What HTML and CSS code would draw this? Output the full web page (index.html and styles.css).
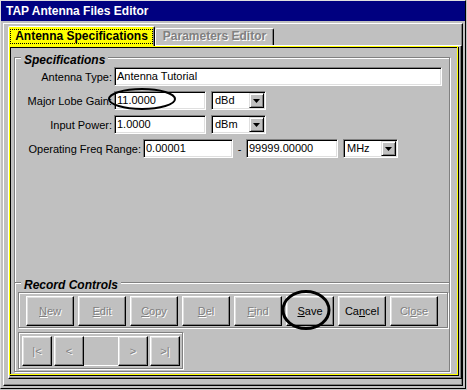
FILE: index.html
```html
<!DOCTYPE html>
<html>
<head lang="en">
    <meta charset="UTF-8">
    <title>TAP Antenna Files Editor</title>
    <link rel="stylesheet" href="styles.css">
</head>
<body>
<div class="window">
    <div class="titlebar">TAP Antenna Files Editor</div>
    <div class="client">
        <!-- tabs -->
        <div class="tabs">
            <div class="tab tab-active"><span class="tab-focus">Antenna Specifications</span></div>
            <div class="tab tab-off">Parameters Editor</div>
        </div>
        <div class="page">
            <div class="page-focus">
                <div class="page-body">
                    <div class="group group-spec">
                        <div class="group-title">Specifications</div>
                        <div class="row">
                            <label class="lbl">Antenna Type:</label>
                            <div class="field w-type">Antenna Tutorial</div>
                        </div>
                        <div class="row">
                            <label class="lbl">Major Lobe Gain:</label>
                            <div class="field w-num">11.0000</div>
                            <div class="combo"><span class="combo-text">dBd</span><span class="combo-btn"><svg width="7" height="4"><path d="M0 0h7L3.5 4z"/></svg></span></div>
                        </div>
                        <div class="row">
                            <label class="lbl">Input Power:</label>
                            <div class="field w-num">1.0000</div>
                            <div class="combo"><span class="combo-text">dBm</span><span class="combo-btn"><svg width="7" height="4"><path d="M0 0h7L3.5 4z"/></svg></span></div>
                        </div>
                        <div class="row">
                            <label class="lbl lbl-wide">Operating Freq Range:</label>
                            <div class="field w-freq">0.00001</div>
                            <span class="dash">-</span>
                            <div class="field w-num">99999.00000</div>
                            <div class="combo"><span class="combo-text">MHz</span><span class="combo-btn"><svg width="7" height="4"><path d="M0 0h7L3.5 4z"/></svg></span></div>
                        </div>
                        <div class="spacer"></div>

                        <!-- record controls -->
                        <div class="group group-record">
                            <div class="group-title">Record Controls</div>
                            <div class="btn-panel">
                                <div class="btn off"><u>N</u>ew</div>
                                <div class="btn off"><u>E</u>dit</div>
                                <div class="btn off"><u>C</u>opy</div>
                                <div class="btn off"><u>D</u>el</div>
                                <div class="btn off"><u>F</u>ind</div>
                                <div class="btn"><u>S</u>ave</div>
                                <div class="btn">Ca<u>n</u>cel</div>
                                <div class="btn off">Cl<u>o</u>se</div>
                            </div>
                            <div class="nav-panel">
                                <div class="btn nav off gap">|&lt;</div>
                                <div class="btn nav off">&lt;</div>
                                <div class="nav-field"></div>
                                <div class="btn nav off gap">&gt;</div>
                                <div class="btn nav off">&gt;|</div>
                            </div>
                        </div>
                    </div>
                </div>
            </div>
        </div>
    </div>
    <!-- hand drawn marks -->
    <svg class="marks" width="467" height="390">
        <ellipse cx="142" cy="99" rx="33" ry="10" fill="none" stroke="#000" stroke-width="2"/>
        <ellipse cx="306" cy="310" rx="23" ry="18.5" fill="none" stroke="#000" stroke-width="3"/>
    </svg>
</div>
</body>
</html>
```

FILE: styles.css
```css
* {
    box-sizing: border-box;
}
body {
    margin: 0;
    background: #c0c0c0;
    font-family: "Liberation Sans", Arial, sans-serif;
    font-size: 11px;
    color: #000;
}
.window {
    position: relative;
    width: 466px;
    height: 389px;
    display: flex;
    flex-direction: column;
    border: 1px solid;
    border-color: #dfdfdf #000 #000 #dfdfdf;
    background: #c0c0c0;
}
.titlebar {
    height: 20px;
    padding: 1px 0 0 5px;
    line-height: 19px;
    background: #000080;
    color: #fff;
    font-size: 12px;
    font-weight: bold;
}
.client {
    flex: 1;
    margin: 2px 2px 2px 2px;
    padding: 2px 0 6px 4px;
    border: 1px solid;
    border-color: #fff #000 #000 #fff;
    box-shadow: inset -1px -1px 0 #808080;
    display: flex;
    flex-direction: column;
}

/* tabs */
.tabs {
    height: 19px;
    display: flex;
    align-items: flex-end;
}
.tab {
    font-size: 12px;
    font-weight: bold;
    border-top: 1px solid #fff;
    border-left: 1px solid #fff;
    border-right: 1px solid #000;
    box-shadow: inset -1px 0 0 #808080;
    border-radius: 2px 2px 0 0;
}
.tab-active {
    position: relative;
    z-index: 1;
    width: 147px;
    height: 20px;
    margin-bottom: -1px;
    padding: 2px 0 0 1px;
    background: #ffff00;
}
.tab-focus {
    display: block;
    width: 143px;
    height: 15px;
    line-height: 13px;
    border: 1px dotted #000;
    text-align: center;
}
.tab-off {
    width: 119px;
    height: 17px;
    line-height: 15px;
    text-align: center;
    color: #808080;
    text-shadow: 1px 1px 0 #fff;
}

/* tab page */
.page {
    flex: 1;
    display: flex;
    padding: 0 3px 3px 0;
    border: 1px solid;
    border-color: #fff #000 #000 #fff;
    box-shadow: inset -1px -1px 0 #808080;
}
.page-focus {
    flex: 1;
    display: flex;
    border: 1px solid #ffff00;
    box-shadow: 1px 1px 0 #000;
}
.page-body {
    flex: 1;
    display: flex;
    flex-direction: column;
    padding: 9px 7px 2px 3px;
    border-top: 1px solid #000;
    border-left: 1px solid #000;
}

/* group boxes */
.group {
    display: flex;
    flex-direction: column;
    border: 1px solid #808080;
    box-shadow: inset 1px 1px 0 #fff, 1px 1px 0 #fff;
}
.group-spec {
    flex: 1;
}
.group-title {
    align-self: flex-start;
    margin: -5px 0 0 6px;
    padding: 0 3px;
    line-height: 14px;
    background: #c0c0c0;
    font-size: 12px;
    font-weight: bold;
    font-style: italic;
}
.spacer {
    flex: 1;
}
.group-record {
    margin: 0 -1px -1px -1px;
}

/* form rows */
.row {
    display: flex;
    align-items: center;
    height: 19px;
    margin-bottom: 5px;
}
.lbl {
    width: 97px;
    margin-right: 2px;
    text-align: right;
    white-space: nowrap;
}
.lbl-wide {
    width: 126px;
}
.field {
    height: 19px;
    padding: 0 2px;
    line-height: 17px;
    background: #fff;
    border: 1px solid;
    border-color: #808080 #fff #fff #808080;
    box-shadow: inset 1px 1px 0 #000, inset -1px -1px 0 #dfdfdf;
    white-space: nowrap;
}
.w-type {
    width: 328px;
}
.w-num {
    width: 92px;
}
.w-freq {
    width: 90px;
}
.dash {
    width: 13px;
    text-align: center;
}
.combo {
    width: 55px;
    height: 19px;
    margin-left: 5px;
    padding: 1px;
    display: flex;
    background: #fff;
    border: 1px solid;
    border-color: #808080 #fff #fff #808080;
    box-shadow: inset 1px 1px 0 #000, inset -1px -1px 0 #dfdfdf;
}
.combo-text {
    flex: 1;
    padding: 0 0 0 2px;
    line-height: 15px;
}
.combo-btn {
    width: 15px;
    height: 15px;
    display: flex;
    align-items: center;
    justify-content: center;
    background: #c0c0c0;
    border: 1px solid;
    border-color: #dfdfdf #000 #000 #dfdfdf;
    box-shadow: inset 1px 1px 0 #fff, inset -1px -1px 0 #808080;
}

/* buttons */
.btn-panel {
    display: flex;
    gap: 4px;
    margin: 0 1px 0 3px;
    padding: 3px 0 1px 7px;
    border: 1px solid #808080;
    box-shadow: inset 1px 1px 0 #fff, 1px 1px 0 #fff;
}
.btn {
    width: 48px;
    height: 30px;
    line-height: 28px;
    text-align: center;
    background: #c0c0c0;
    border: 1px solid;
    border-color: #fff #000 #000 #fff;
    box-shadow: inset -1px -1px 0 #808080, inset 1px 1px 0 #dfdfdf;
}
.btn.off {
    color: #808080;
    text-shadow: 1px 1px 0 #fff;
}
.nav-panel {
    align-self: flex-start;
    display: flex;
    margin: 4px 0 2px 3px;
    padding: 3px 2px 2px 3px;
    border: 1px solid #808080;
    box-shadow: inset 1px 1px 0 #fff, 1px 1px 0 #fff;
}
.btn.nav {
    width: 30px;
}
.btn.gap {
    margin-right: 2px;
}
.nav-field {
    width: 34px;
    height: 30px;
    border-top: 1px solid #fff;
    border-bottom: 1px solid #fff;
}

.marks {
    position: absolute;
    left: -1px;
    top: -1px;
    pointer-events: none;
}
```
